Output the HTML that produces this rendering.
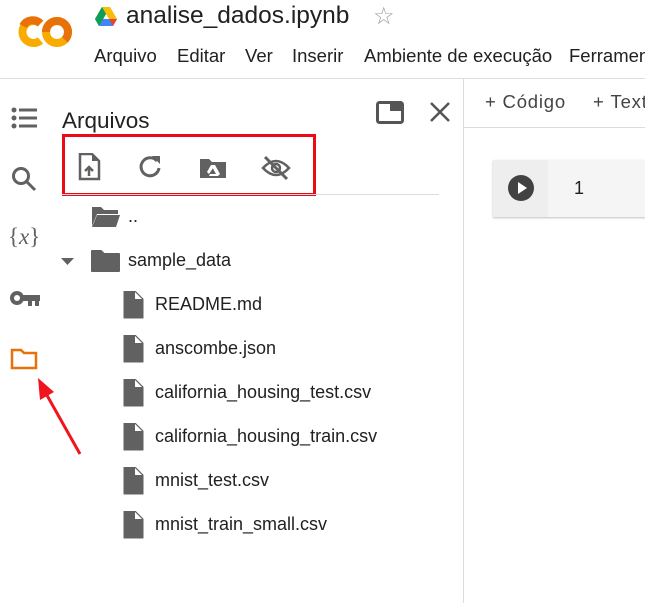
<!DOCTYPE html>
<html><head><meta charset="utf-8"><style>
body{margin:0;width:645px;height:603px;overflow:hidden;background:#fff;font-family:"Liberation Sans",Arial,sans-serif;color:#212121;position:relative}
.a{position:absolute}
.t{font-size:18px;color:#212121;white-space:nowrap}
.m{position:absolute;top:45px;font-size:18.5px;color:#212121;white-space:nowrap}
</style></head><body>
<!-- logo -->
<svg class="a" style="left:14px;top:13px" width="62" height="38" viewBox="0 0 62 38">
<path d="M26.5 10.5 A11 11 0 1 0 26.5 27.5" fill="none" stroke="#f9ab00" stroke-width="8"/>
<path d="M26.5 10.5 A11 11 0 0 0 9 13" fill="none" stroke="#e8710a" stroke-width="8"/>
<circle cx="43" cy="19" r="11" fill="none" stroke="#f9ab00" stroke-width="8"/>
<path d="M32 19 A11 11 0 0 1 43 8 A11 11 0 0 1 54 19 A11 11 0 0 1 50.8 26.8" fill="none" stroke="#e8710a" stroke-width="8"/>
</svg>
<!-- drive -->
<svg class="a" style="left:95px;top:7px" width="22" height="19" viewBox="0 0 22 19">
<polygon points="7,0 15,0 11,7" fill="#fbbc04"/><polygon points="7,0 0,12 4,19 11,7" fill="#1e8e3e"/>
<polygon points="15,0 22,12 14,12 11,7" fill="#fbbc04"/><polygon points="4,19 18,19 22,12 8,12" fill="#4285f4"/>
<polygon points="18,19 22,12 14,12" fill="#ea4335"/><polygon points="7,0 11,7 4,19 0,12" fill="#0f9d58"/>
</svg>
<div class="a" style="left:126px;top:2px;font-size:24.5px;color:#202124">analise_dados.ipynb</div>
<div class="a" style="left:373px;top:2px;font-size:24px;color:#9aa0a6">☆</div>
<div class="m" style="left:94px">Arquivo</div>
<div class="m" style="left:177px">Editar</div>
<div class="m" style="left:245px">Ver</div>
<div class="m" style="left:292px">Inserir</div>
<div class="m" style="left:364px">Ambiente de execução</div>
<div class="m" style="left:569px">Ferramentas</div>
<div class="a" style="left:0;top:78px;width:645px;height:1px;background:#dadce0"></div>
<div class="a" style="left:463px;top:79px;width:1px;height:524px;background:#dadce0"></div>
<div class="a" style="left:464px;top:127px;width:181px;height:1px;background:#dadce0"></div>
<div class="a" style="left:485px;top:91px;font-size:18.5px;letter-spacing:.8px;color:#444;white-space:nowrap">+&nbsp;Código</div>
<div class="a" style="left:593px;top:91px;font-size:18.5px;letter-spacing:.8px;color:#444;white-space:nowrap">+&nbsp;Texto</div>
<div class="a" style="left:493px;top:160px;width:160px;height:57px;background:#f5f5f5;box-shadow:0 1px 2px rgba(0,0,0,.25)"></div>
<div class="a" style="left:493px;top:160px;width:55px;height:57px;background:#eeeeee"></div>
<svg class="a" style="left:508px;top:175px" width="26" height="26"><circle cx="13" cy="13" r="13" fill="#424242"/><polygon points="10,7 19,13 10,19" fill="#fff"/></svg>
<div class="a t" style="left:574px;top:178px">1</div>
<!-- left rail -->
<svg class="a" style="left:11px;top:107px" width="26" height="22" fill="#616161"><circle cx="3" cy="3" r="2.5"/><circle cx="3" cy="11" r="2.5"/><circle cx="3" cy="19" r="2.5"/><rect x="8" y="1.5" width="18" height="3"/><rect x="8" y="9.5" width="18" height="3"/><rect x="8" y="17.5" width="18" height="3"/></svg>
<svg class="a" style="left:11px;top:166px" width="26" height="26" fill="none" stroke="#616161" stroke-width="3"><circle cx="10" cy="10" r="7.5"/><line x1="15.5" y1="15.5" x2="24" y2="24"/></svg>
<div class="a" style="left:8px;top:224px;font-size:23px;color:#616161;font-family:'Liberation Serif',serif"><span>{</span><i>x</i><span>}</span></div>
<svg class="a" style="left:10px;top:291px" width="30" height="16" fill="#616161"><circle cx="7" cy="7" r="7"/><circle cx="7" cy="7" r="3" fill="#fff"/><rect x="12" y="4" width="18" height="6"/><rect x="18" y="9" width="4" height="6"/><rect x="25" y="9" width="4" height="6"/></svg>
<svg class="a" style="left:10px;top:347px" width="29" height="24" fill="none" stroke="#e8710a" stroke-width="2.5"><path d="M2 3 h9 l3 3 h12 v15 H2 Z"/></svg>
<svg class="a" style="left:30px;top:370px" width="60" height="90"><line x1="50" y1="84" x2="14" y2="20" stroke="#f0141e" stroke-width="3"/><polygon points="8,8 24,22 10,30" fill="#f0141e"/></svg>
<!-- panel -->
<div class="a" style="left:62px;top:108px;font-size:22.5px;color:#212121">Arquivos</div>
<svg class="a" style="left:376px;top:101px" width="28" height="24"><rect x="1.5" y="1.5" width="25" height="20" rx="2" fill="none" stroke="#555" stroke-width="3"/><rect x="14" y="1" width="13" height="9" fill="#555"/></svg>
<svg class="a" style="left:429px;top:101px" width="22" height="22" stroke="#555" stroke-width="2.5"><line x1="2" y1="2" x2="20" y2="20"/><line x1="20" y1="2" x2="2" y2="20"/></svg>
<div class="a" style="left:62px;top:134px;width:248px;height:56px;border:3px solid #ec0a14"></div>
<svg class="a" style="left:78px;top:153px" width="24" height="28"><path d="M2 1 h12 l7 7 v18 H2 Z" fill="none" stroke="#616161" stroke-width="2.5"/><path d="M14 1 v7 h7" fill="#616161"/><path d="M11 23 v-8 M7 18 l4-4 4 4" stroke="#616161" stroke-width="2.5" fill="none"/></svg>
<svg class="a" style="left:137px;top:154px" width="26" height="26" fill="none" stroke="#616161" stroke-width="3"><path d="M20 7 A9 9 0 1 0 22 14"/><polygon points="15,2 23,2 23,10" fill="#616161" stroke="none"/></svg>
<svg class="a" style="left:199px;top:157px" width="28" height="22"><path d="M1 2 h9 l3 3 h14 v16 H1 Z" fill="#616161"/><polygon points="12,8 16,8 21,17 17,17" fill="#fff"/><polygon points="12,8 8,15 10,17 14,11" fill="#fff"/><polygon points="11,17 21,17 19,19 10,19" fill="#fff"/></svg>
<svg class="a" style="left:261px;top:154px" width="30" height="28" fill="none" stroke="#616161" stroke-width="2.5"><path d="M2 14 Q15 0 28 14 Q15 28 2 14 Z"/><circle cx="15" cy="14" r="4"/><line x1="4" y1="3" x2="26" y2="25" stroke-width="3"/></svg>
<div class="a" style="left:62px;top:194px;width:377px;height:1px;background:#dadce0"></div>
<svg class="a" style="left:91px;top:206px" width="30" height="22"><path d="M1 1 h9 l3 3 h14 v4 H6 L1 20 Z" fill="#616161"/><path d="M6 9 h23 l-4 12 H1 Z" fill="#616161"/></svg>
<div class="a t" style="left:128px;top:206px">..</div>
<svg class="a" style="left:61px;top:258px" width="14" height="8"><polygon points="0,0 13,0 6.5,7" fill="#616161"/></svg>
<svg class="a" style="left:91px;top:250px" width="30" height="22"><path d="M1 1 h9 l3 3 h15 v17 H1 Z" fill="#616161" stroke="#616161" stroke-linejoin="round" stroke-width="2"/></svg>
<div class="a t" style="left:128px;top:250px">sample_data</div>
<div id="files"></div>
<script>
var n=["README.md","anscombe.json","california_housing_test.csv","california_housing_train.csv","mnist_test.csv","mnist_train_small.csv"],h="";
n.forEach(function(s,i){var y=305+44*i;
h+='<svg class="a" style="left:122px;top:'+(y-14)+'px" width="22" height="28"><path d="M2 0 h11 l8 8 v19 H2 Z" fill="#616161" stroke="#616161" stroke-width="1" stroke-linejoin="round"/><path d="M13 1 v7 h7 Z" fill="#fff"/></svg><div class="a t" style="left:155px;top:'+(y-11)+'px">'+s+'</div>';});
document.getElementById("files").outerHTML=h;
</script>
</body></html>
